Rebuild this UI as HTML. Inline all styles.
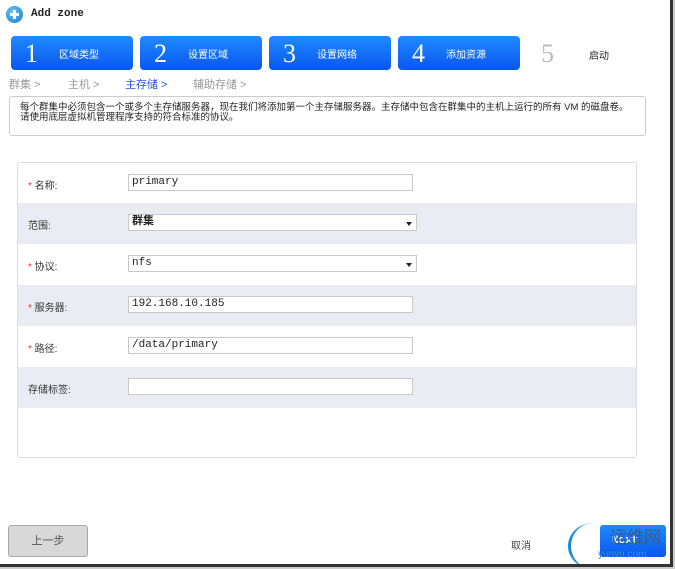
<!DOCTYPE html>
<html><head><meta charset="utf-8"><style>
*{margin:0;padding:0;box-sizing:border-box}
body{width:675px;height:569px;position:relative;background:#fff;font-family:"Liberation Sans","Noto Sans CJK SC",sans-serif;overflow:hidden;color:#333}
.abs{position:absolute}
.step{position:absolute;top:36px;width:122px;height:34px;border-radius:4px;background:linear-gradient(#1e8bff,#0a56f0);color:#fff}
.step .n{position:absolute;left:14px;top:3px;font:26px "Liberation Serif",serif}
.step .t{position:absolute;left:48px;top:10px;font-size:10px}
.row{position:absolute;left:18px;width:618px;height:41px}
.g{background:#e9edf3}
.lab{position:absolute;left:10px;top:14px;font-size:10px;color:#333}
.lab b{color:#e33;font-weight:normal}
.inp{position:absolute;left:110px;top:11px;width:285px;height:17px;border:1px solid #c8c8c8;background:#fff;font:11px/15px "Liberation Mono","Noto Sans CJK SC",monospace;padding:0 3px;color:#222}
.sel{width:289px}
.sel:after{content:"";position:absolute;right:4px;top:7px;border:3px solid transparent;border-top:4px solid #222}
</style></head><body>
<div class="abs" style="left:6px;top:6px;width:17px;height:17px;border-radius:50%;background:radial-gradient(circle at 40% 35%,#6cc3f5,#1479c8);"></div>
<div class="abs" style="left:10px;top:13px;width:9px;height:3px;background:#fff"></div>
<div class="abs" style="left:13px;top:10px;width:3px;height:9px;background:#fff"></div>
<div class="abs" style="left:31px;top:8px;font:bold 11px 'Liberation Mono',monospace;color:#222">Add zone</div>

<div class="step" style="left:11px"><span class="n">1</span><span class="t">区域类型</span></div>
<div class="step" style="left:140px"><span class="n">2</span><span class="t">设置区域</span></div>
<div class="step" style="left:269px"><span class="n">3</span><span class="t">设置网络</span></div>
<div class="step" style="left:398px"><span class="n">4</span><span class="t">添加资源</span></div>
<div class="abs" style="left:541px;top:39px;font:26px 'Liberation Serif',serif;color:#bbb">5</div>
<div class="abs" style="left:589px;top:47px;font-size:10px;color:#222">启动</div>

<div class="abs" style="left:9px;top:76px;font-size:11px;color:#999">群集 &gt;</div>
<div class="abs" style="left:68px;top:76px;font-size:11px;color:#999">主机 &gt;</div>
<div class="abs" style="left:125px;top:76px;font-size:11px;color:#2a4ee0">主存储 &gt;</div>
<div class="abs" style="left:193px;top:76px;font-size:11px;color:#999">辅助存储 &gt;</div>

<div class="abs" style="left:9px;top:96px;width:637px;height:40px;border:1px solid #ccc;border-radius:3px;font-size:9.5px;line-height:10px;padding:6px 10px;color:#222">每个群集中必须包含一个或多个主存储服务器，现在我们将添加第一个主存储服务器。主存储中包含在群集中的主机上运行的所有 VM 的磁盘卷。请使用底层虚拟机管理程序支持的符合标准的协议。</div>

<div class="abs" style="left:17px;top:162px;width:620px;height:296px;border:1px solid #ddd;border-radius:3px"></div>
<div class="row" style="top:163px"><div class="lab"><b>*</b> 名称:</div><div class="inp">primary</div></div>
<div class="row g" style="top:203px"><div class="lab">范围:</div><div class="inp sel" style="font-weight:bold">群集</div></div>
<div class="row" style="top:244px"><div class="lab"><b>*</b> 协议:</div><div class="inp sel">nfs</div></div>
<div class="row g" style="top:285px"><div class="lab"><b>*</b> 服务器:</div><div class="inp">192.168.10.185</div></div>
<div class="row" style="top:326px"><div class="lab"><b>*</b> 路径:</div><div class="inp">/data/primary</div></div>
<div class="row g" style="top:367px"><div class="lab">存储标签:</div><div class="inp"></div></div>

<div class="abs" style="left:8px;top:525px;width:80px;height:32px;border:1px solid #aaa;border-radius:3px;background:#d8d8d8;font-size:11px;color:#555;text-align:center;line-height:30px">上一步</div>
<div class="abs" style="left:511px;top:537px;font-size:10px;color:#444">取消</div>
<div class="abs" style="left:600px;top:525px;width:66px;height:32px;border-radius:3px;background:linear-gradient(#1e8bff,#0a56f0);"></div>
<div class="abs" style="left:612px;top:535px;font:bold 11px 'Liberation Mono',monospace;color:#fff">Next</div>
<div class="abs" style="left:568px;top:523px;width:50px;height:46px;border-left:3px solid #1a8ad8;border-radius:50%"></div>
<div class="abs" style="left:610px;top:523px;font-size:17px;color:#3a5a88">运维网</div>
<div class="abs" style="left:598px;top:549px;font-size:10px;color:#3a8ad8">yunvn.com</div>

<div class="abs" style="left:670px;top:0;width:3px;height:567px;background:#333"></div>
<div class="abs" style="left:673px;top:0;width:2px;height:569px;background:#ccc"></div>
<div class="abs" style="left:0;top:564px;width:673px;height:3px;background:#333"></div>
<div class="abs" style="left:0;top:567px;width:675px;height:2px;background:#ccc"></div>
</body></html>
